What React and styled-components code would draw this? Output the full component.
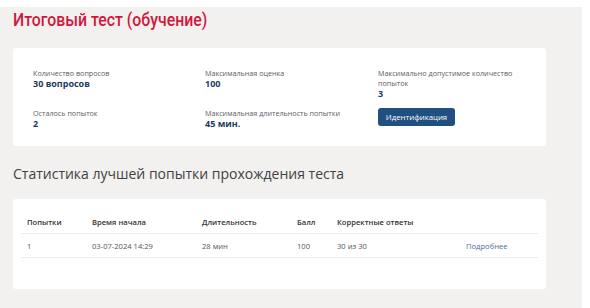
import React from "react";
import styled, { createGlobalStyle } from "styled-components";

const GlobalStyle = createGlobalStyle`
  html, body {
    margin: 0;
    padding: 0;
    background: #ffffff;
  }
  body {
    font-family: "Open Sans", "Noto Sans", sans-serif;
  }
`;

const Page = styled.div`
  width: 582px;
  min-height: 301px;
  margin-top: 7px;
  background: #f2f1ef;
  padding: 0 36px 20px 13px;
  box-sizing: border-box;
`;

const Title = styled.h1`
  display: inline-block;
  margin: 0;
  padding-top: 1px;
  font-family: Roboto, "Open Sans", sans-serif;
  font-size: 18px;
  line-height: 24px;
  font-weight: 500;
  color: #d3163b;
  transform: scaleX(0.88);
  transform-origin: left center;
`;

const Card = styled.div`
  background: #ffffff;
  border-radius: 3px;
  margin-top: ${(p) => p.$top}px;
  padding: ${(p) => p.$pad};
`;

const InfoGrid = styled.div`
  display: grid;
  grid-template-columns: 172px 173px 140px;
  row-gap: 9px;
`;

const Info = styled.div`
  display: flex;
  flex-direction: column;
`;

const Label = styled.span`
  font-size: 7.2px;
  line-height: 10px;
  color: #5a5e63;
`;

const Value = styled.span`
  font-size: 9px;
  line-height: 11px;
  font-weight: 700;
  color: #1d3b60;
`;

const Button = styled.button`
  align-self: flex-start;
  border: none;
  border-radius: 3px;
  background: #1f5080;
  color: #ffffff;
  font-family: inherit;
  font-size: 7.8px;
  font-weight: 400;
  height: 18px;
  width: 77px;
  padding: 0;
`;

const SectionTitle = styled.h2`
  margin: 18px 0 0;
  font-size: 14px;
  line-height: 20px;
  font-weight: 400;
  color: #3f4144;
`;

const Table = styled.table`
  width: 100%;
  border-collapse: collapse;
  font-size: 7.6px;
`;

const Th = styled.th`
  text-align: left;
  font-weight: 600;
  color: #333;
  padding: 0 6px;
  height: 22px;
  vertical-align: middle;
  border-bottom: 1px solid #ececec;
`;

const Td = styled.td`
  padding: 0 6px;
  height: 23px;
  color: #555;
  border-bottom: 1px solid #ececec;
`;

const Link = styled.a`
  color: #4b6f95;
  text-decoration: none;
`;

export default function App() {
  return (
    <>
      <GlobalStyle />
      <Page>
        <Title>Итоговый тест (обучение)</Title>
        <Card $top={16} $pad="20px 20px 17px 20px">
          <InfoGrid>
            <Info>
              <Label>Количество вопросов</Label>
              <Value>30 вопросов</Value>
            </Info>
            <Info>
              <Label>Максимальная оценка</Label>
              <Value>100</Value>
            </Info>
            <Info>
              <Label>Максимально допустимое количество попыток</Label>
              <Value>3</Value>
            </Info>
            <Info>
              <Label>Осталось попыток</Label>
              <Value>2</Value>
            </Info>
            <Info>
              <Label>Максимальная длительность попытки</Label>
              <Value>45 мин.</Value>
            </Info>
            <Info>
              <Button>Идентификация</Button>
            </Info>
          </InfoGrid>
        </Card>
        <SectionTitle>Статистика лучшей попытки прохождения теста</SectionTitle>
        <Card $top={15} $pad="12px 8px 31px 8px">
          <Table>
            <colgroup>
              <col style={{ width: 65 }} />
              <col style={{ width: 110 }} />
              <col style={{ width: 95 }} />
              <col style={{ width: 40 }} />
              <col style={{ width: 129 }} />
              <col />
            </colgroup>
            <thead>
              <tr>
                <Th>Попытки</Th>
                <Th>Время начала</Th>
                <Th>Длительность</Th>
                <Th>Балл</Th>
                <Th>Корректные ответы</Th>
                <Th></Th>
              </tr>
            </thead>
            <tbody>
              <tr>
                <Td>1</Td>
                <Td>03-07-2024 14:29</Td>
                <Td>28 мин</Td>
                <Td>100</Td>
                <Td>30 из 30</Td>
                <Td>
                  <Link href="#">Подробнее</Link>
                </Td>
              </tr>
            </tbody>
          </Table>
        </Card>
      </Page>
    </>
  );
}
